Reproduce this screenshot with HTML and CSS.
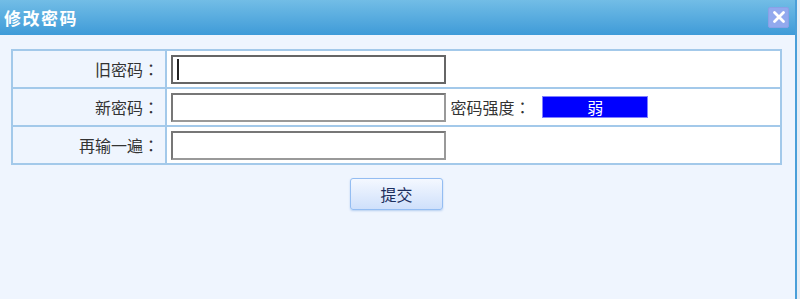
FILE: index.html
```html
<!DOCTYPE html>
<html lang="zh-CN">
<head>
    <meta charset="UTF-8">
    <title>修改密码</title>
    <link rel="stylesheet" href="styles.css">
</head>
<body>
    <div class="window">
        <div class="titlebar">
            <span class="title">修改密码</span>
            <span class="close">
                <svg width="14" height="14" viewBox="0 0 14 14">
                    <path d="M2.5 2.5 L11.5 11.5 M11.5 2.5 L2.5 11.5" stroke="#fff" stroke-width="2.8" stroke-linecap="round"/>
                </svg>
            </span>
        </div>
        <div class="content">
            <table class="form-table">
                <tr>
                    <td class="label">旧密码<span class="colon" lang="zh-TW">：</span></td>
                    <td class="field"><input type="password" class="input focused"><span class="caret"></span></td>
                </tr>
                <tr>
                    <td class="label">新密码<span class="colon" lang="zh-TW">：</span></td>
                    <td class="field">
                        <input type="password" class="input">
                        <span class="strength-label">密码强度<span class="colon" lang="zh-TW">：</span></span>
                        <span class="strength">弱</span>
                    </td>
                </tr>
                <tr>
                    <td class="label">再输一遍<span class="colon" lang="zh-TW">：</span></td>
                    <td class="field"><input type="password" class="input"></td>
                </tr>
            </table>
            <div class="actions">
                <button class="button">提交</button>
            </div>
        </div>
    </div>
</body>
</html>
```

FILE: styles.css
```css
html, body {
    margin: 0;
    padding: 0;
    height: 100%;
}
body {
    font-family: "Noto Sans CJK SC", "Liberation Sans", sans-serif;
    background: #e8eef5;
    overflow: hidden;
}
.window {
    width: 795px;
    height: 299px;
    border-right: 2px solid #4a9fd9;
    display: flex;
    flex-direction: column;
}
.titlebar {
    height: 35px;
    flex: none;
    background: linear-gradient(#72bde6, #3f9bd8);
    display: flex;
    align-items: center;
    justify-content: space-between;
    padding: 0 6px 0 4px;
}
.title {
    color: #fff;
    font-size: 17px;
    font-weight: bold;
    letter-spacing: 1.5px;
}
.close {
    width: 19px;
    height: 19px;
    background: #92a9ee;
    border: 1px solid #8aa0e6;
    border-radius: 2px;
    display: flex;
    align-items: center;
    justify-content: center;
    margin-top: -1px;
}
.content {
    flex: 1;
    background: #eff5fe;
    padding: 14px 13px 0 11px;
}
.form-table {
    width: 100%;
    border-collapse: collapse;
    font-size: 16px;
    color: #333;
}
.form-table td {
    border: 2px solid #a3c9ea;
    height: 36px;
    padding: 0;
}
.colon {
    font-family: "Noto Sans CJK TC", sans-serif;
}
.label {
    width: 146px;
    text-align: right;
    padding-right: 6px !important;
    background: #eff5fe;
}
.field {
    background: #fff;
    padding-left: 4px !important;
    position: relative;
}
.input {
    width: 271px;
    height: 25px;
    border: 2px solid #999;
    border-top-color: #777;
    border-left-color: #777;
    padding: 0;
    margin: 0;
    vertical-align: middle;
    background: #fff;
}
.input.focused {
    border-color: #666;
}
.caret {
    position: absolute;
    left: 10px;
    top: 8px;
    width: 2px;
    height: 21px;
    background: #222;
}
.strength-label {
    vertical-align: middle;
    margin-left: 1px;
}
.strength {
    display: inline-block;
    vertical-align: middle;
    width: 104px;
    height: 20px;
    line-height: 20px;
    margin-left: 8px;
    background: #0000ff;
    border: 1px solid #8080ff;
    color: #fff;
    text-align: center;
    font-size: 16px;
}
.actions {
    text-align: center;
    padding-top: 13px;
}
.button {
    width: 93px;
    height: 32px;
    font-family: inherit;
    font-size: 16px;
    color: #1c2f5e;
    background: linear-gradient(#f4f8ff, #cfe0fb);
    border: 1px solid #94bdf2;
    border-radius: 3px;
    box-shadow: 0 1px 2px rgba(100,150,220,0.4);
    cursor: pointer;
}
```
